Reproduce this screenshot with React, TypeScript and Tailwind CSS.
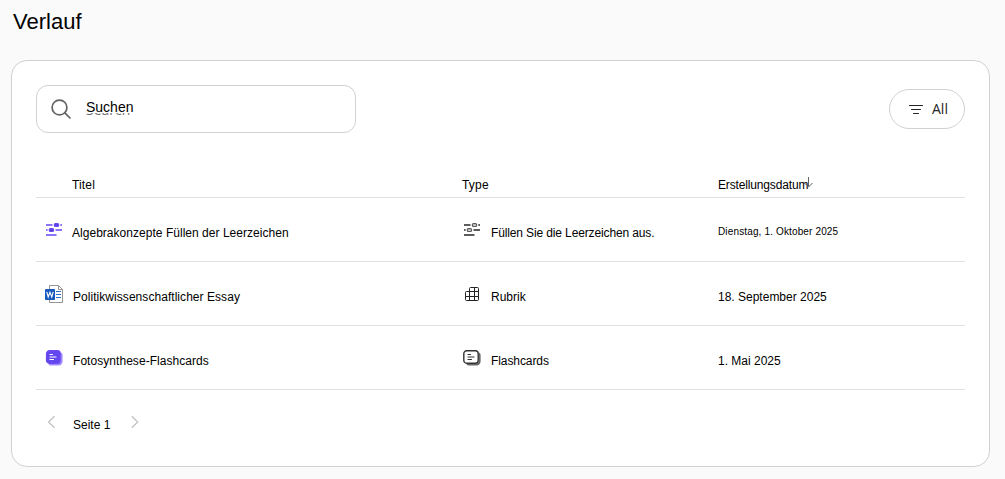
import type { ReactNode } from "react";

function SearchIcon() {
  return (
    <svg width="20" height="20" viewBox="0 0 20 20" fill="none" stroke="#616161" strokeWidth="1.7" strokeLinecap="round">
      <circle cx="8.5" cy="8.5" r="7.4" />
      <path d="M13.8 13.8 19 19" />
    </svg>
  );
}

function FilterIcon() {
  return (
    <svg width="14" height="10" viewBox="0 0 14 10" fill="none" stroke="#242424" strokeLinecap="round">
      <path d="M.5 1.5h13M2.5 5.5h9M4.5 9.5h5" />
    </svg>
  );
}

function BlanksIcon({ filled = false }: { filled?: boolean }) {
  const line = filled ? "#8b74f8" : "#5c5c5c";
  const dot = filled ? "#5b3fe6" : "#d0d0d0";
  const edge = filled ? "#6a4bf0" : "#5c5c5c";
  return (
    <svg width="18" height="14" viewBox="0 0 18 14" fill="none" strokeWidth="1.8">
      <path d="M1 2h6.5M15.3 2H17M1 7h1.6M10.5 7H17M1 12h10.5" stroke={line} />
      <rect x="9.4" y=".6" width="4.2" height="2.9" rx="1" fill={dot} stroke={edge} strokeWidth="1.2" />
      <rect x="4.3" y="5.6" width="4.2" height="2.9" rx="1" fill={dot} stroke={edge} strokeWidth="1.2" />
    </svg>
  );
}

function WordIcon() {
  return (
    <svg width="18" height="18" viewBox="0 0 18 18" fill="none">
      <path d="M4.5.5h9l4 4v13h-13z" fill="#fff" stroke="#979593" />
      <path d="M13.5.5v4h4" stroke="#979593" />
      <path d="M11 6.5h5M11 9.5h5M11 12.5h5" stroke="#2b74c9" />
      <rect y="4" width="10" height="11" rx=".8" fill="#185abd" />
      <path d="m1.8 6.8 1.4 5.2L5 7.2 6.8 12l1.4-5.2" stroke="#fff" strokeWidth="1.1" />
    </svg>
  );
}

function CardsIcon({ filled = false }: { filled?: boolean }) {
  const ink = filled ? "#ffffff" : "#333333";
  return (
    <svg width="18" height="16" viewBox="0 0 18 16" fill="none" strokeLinecap="round">
      <path
        d="M16 2.5c1 .5 1.6 1.3 1.6 2.4v6.4c0 2.6-1.6 4.2-4.2 4.2H6.4c-1.4 0-2.4-.5-3-1.6h9.3c2 0 3.3-1.3 3.3-3.3z"
        fill={filled ? "#a08bff" : "#666666"}
      />
      <rect
        x={filled ? 1.6 : 0.8}
        y="0.8"
        width={filled ? 13.6 : 14.4}
        height="12.4"
        rx="2.8"
        fill={filled ? "#6246f0" : "#ffffff"}
        stroke={filled ? "#6d48ef" : "#333333"}
        strokeWidth="1.4"
      />
      <path d="M5 4.5h2.5M5 7h6M5 9.5h3.5" stroke={ink} strokeWidth="1.2" />
    </svg>
  );
}

function RubricIcon() {
  return (
    <svg width="14" height="14" viewBox="0 0 14 14" fill="none" stroke="#242424">
      <path d="M4.5 4.5v-3q0-1 1-1h7q1 0 1 1v11q0 1-1 1h-11q-1 0-1-1v-7q0-1 1-1h12M.5 9.5h13M4.5 4.5v9M9.5.5v13" />
    </svg>
  );
}

function Chevron({ d }: { d: string }) {
  return (
    <svg width="8" height="14" viewBox="0 0 8 14" fill="none" stroke="#c0c0c0" strokeWidth="1.2">
      <path d={d} />
    </svg>
  );
}

type Row = {
  icon: ReactNode;
  title: string;
  titleClass: string;
  typeIcon: ReactNode;
  type: string;
  typeClass: string;
  date: string;
  dateClass: string;
};

const rows: Row[] = [
  {
    icon: <BlanksIcon filled />,
    title: "Algebrakonzepte Füllen der Leerzeichen",
    titleClass: "tracking-[0.03px]",
    typeIcon: <BlanksIcon />,
    type: "Füllen Sie die Leerzeichen aus.",
    typeClass: "tracking-[-0.13px]",
    date: "Dienstag, 1. Oktober 2025",
    dateClass: "text-[10px] tracking-[0.14px] -mt-[3px]",
  },
  {
    icon: <WordIcon />,
    title: "Politikwissenschaftlicher Essay",
    titleClass: "pl-px tracking-[0.05px]",
    typeIcon: <RubricIcon />,
    type: "Rubrik",
    typeClass: "",
    date: "18. September 2025",
    dateClass: "text-[12px]",
  },
  {
    icon: <CardsIcon filled />,
    title: "Fotosynthese-Flashcards",
    titleClass: "pl-px tracking-[0.05px]",
    typeIcon: <CardsIcon />,
    type: "Flashcards",
    typeClass: "tracking-[-0.08px]",
    date: "1. Mai 2025",
    dateClass: "text-[12px]",
  },
];

export default function App() {
  return (
    <div className="flex h-[479px] w-[1005px] flex-col bg-[#fafafa] font-['Liberation_Sans',Arial,sans-serif] text-black">
      <h1 className="h-[60px] pt-[9px] pl-[13px] text-[22px] leading-[26px]">Verlauf</h1>
      <main className="ml-[11px] h-[407px] w-[979px] rounded-[16px] border border-[#d1d1d1] bg-white px-6 pt-6">
        <div className="flex h-12 items-center justify-between">
          <label className="flex h-12 w-80 items-center rounded-xl border border-[#d1d1d1] pl-[14px]">
            <SearchIcon />
            {/* the translated label sits on top of the original placeholder */}
            <span className="relative ml-[15px] h-6 w-20">
              <span className="absolute top-[3px] left-0 font-['Open_Sans',sans-serif] text-[14px] leading-5 text-[#707070]">
                Search
              </span>
              <span className="absolute top-0 left-0 h-[16px] bg-white text-[14px] leading-[21px]">Suchen</span>
            </span>
          </label>
          <button className="flex h-10 w-[76px] items-center rounded-full border border-[#d1d1d1] pl-[19px]">
            <FilterIcon />
            <span className="ml-[9px] font-['Open_Sans',sans-serif] text-[14px] leading-5 text-[#242424]">All</span>
          </button>
        </div>

        <div className="mt-[40px] flex h-[25px] border-b border-[#e0e0e0] text-[12px] leading-[24px]">
          <span className="w-[426px] pl-9 tracking-[0.15px]">Titel</span>
          <span className="w-[256px] tracking-[0.2px]">Type</span>
          <span className="relative tracking-[-0.15px]">
            Erstellungsdatum
            <svg className="absolute top-[4px] left-[85px]" width="10" height="11" fill="none" stroke="#616161">
              <path d="M5.5 0v9.5M1.5 6l4 4 4-4" />
            </svg>
          </span>
        </div>

        {rows.map((row) => (
          <div key={row.title} className="flex h-16 items-center border-b border-[#e0e0e0] pt-[7px] text-[12px] leading-4">
            <span className="-mt-[6px] flex w-9 justify-center">{row.icon}</span>
            <span className={`w-[390px] ${row.titleClass}`}>{row.title}</span>
            <span className="-mt-[6px] flex w-[29px] justify-start">
              <span className="flex w-5 justify-center">{row.typeIcon}</span>
            </span>
            <span className={`w-[227px] ${row.typeClass}`}>{row.type}</span>
            <span className={row.dateClass}>{row.date}</span>
          </div>
        ))}

        <nav className="flex h-16 items-center pl-[11px] text-[12px] leading-4">
          <Chevron d="M7.5 1.2 1.5 7l6 5.8" />
          <span className="mt-[6px] ml-[18px] w-[58px]">Seite 1</span>
          <Chevron d="m.8 1.2 6 5.8-6 5.8" />
        </nav>
      </main>
    </div>
  );
}
